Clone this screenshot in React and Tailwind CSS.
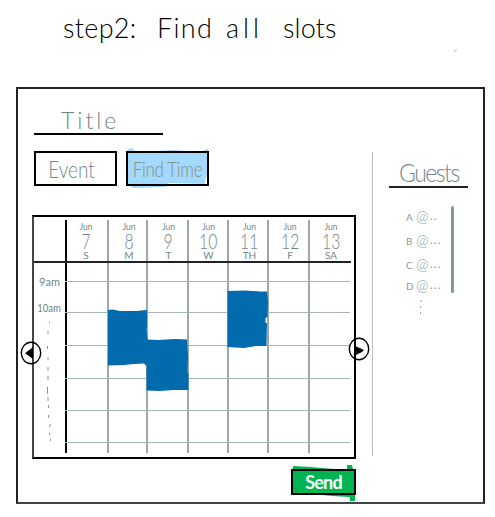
import React from "react";

const days = [
  { n: "7", d: "S", w: "w-[42px]", x: "pr-[2px]" },
  { n: "8", d: "M", w: "w-[39px]", x: "pl-[3px]" },
  { n: "9", d: "T", w: "w-[41px]", x: "pl-[2px]" },
  { n: "10", d: "W", w: "w-[40px]", x: "pl-[1px]" },
  { n: "11", d: "TH", w: "w-[40px]", x: "pl-[3px]" },
  { n: "12", d: "F", w: "w-[41px]", x: "pl-[3px]" },
  { n: "13", d: "SA", w: "w-[42px]", x: "pl-[2px]" },
];

const rows = [
  "h-[19px] border-b",
  "h-[31px] border-b",
  "h-[33px] border-b",
  "h-[33px] border-b",
  "h-[32px] border-b",
  "h-[32px] border-b",
  "h-[10px]",
];

const guests = [
  { n: "A", dots: "..", m: "h-[24px]" },
  { n: "B", dots: "...", m: "h-[24px]" },
  { n: "C", dots: "...", m: "h-[21px]" },
  { n: "D", dots: "...", m: "h-[20px]" },
];

function Heading() {
  return (
    <h1 className="flex h-[87px] pl-[63px] pt-[10px] text-[27px] leading-[36px] font-light text-black">
      <span className="w-[94px] tracking-[0.3px]">step2:</span>
      <span className="w-[69px] tracking-[1.3px]">Find</span>
      <span className="w-[57px] tracking-[4px]">all</span>
      <span className="tracking-[0.1px]">slots</span>
      <svg className="ml-[116px] mt-[38px] h-[6px] w-[6px]" viewBox="0 0 6 6" fill="none" stroke="#bbb">
        <path d="M1 4 Q1 2 4 2" />
      </svg>
    </h1>
  );
}

function Events() {
  return (
    <svg className="absolute left-0 top-0 h-[190px] w-[285px]" viewBox="65 263 285 190" fill="#026bae">
      <path d="M108 310 L113 309.5 L120 311 L136 311 L147 310 L147 327 L146.5 328 L147.5 339.5 L158 340 L175 339 L187 339.5 L188 357 L187.5 373 L188.5 373 L188.5 390 L174 390 L160 391 L146.5 390.5 L146.5 366 L144 363.5 L134 364 L124 365 L108 365.5Z" />
      <path d="M227.5 291 L245 290.5 L260 291.5 L267 291.5 L268 301 L267.5 317 L265.5 318 L265.5 323 L267 323 L266.5 346 L256 346 L244 348 L227.5 347Z" />
    </svg>
  );
}

function Arrow({ left }) {
  return (
    <svg className="h-[24px] w-[22px]" viewBox="0 0 22 24">
      <ellipse cx="11" cy="12" rx="9.7" ry="10.8" fill="none" stroke="#000" strokeWidth="1.4" />
      {left ? (
        <path d="M5 12.2 L13 6 V18Z" />
      ) : (
        <path d="M6 8.5 L16 13 L14 15 L7 18.5Z" />
      )}
    </svg>
  );
}

function Calendar() {
  return (
    <div className="relative ml-[14px] mt-[29px] h-[244px] w-[324px] border-2 border-black border-l-[#444] pt-[3px]">
      <div className="mr-[3px] flex h-[43px] border-b-2 border-[#222]">
        <div className="w-[31px]" />
        {days.map((c, i) => (
          <div
            key={c.n}
            className={`flex flex-col items-center ${c.w} ${c.x} ${i ? "border-l-2 border-[#9aa8aa]" : "border-l-2 border-black"} text-[#71868b]`}
          >
            <span className="mt-[2px] h-[10px] text-[8.5px] leading-[10px]">Jun</span>
            <span className="h-[18px] scale-x-75 text-[21px] font-light leading-[18px]">{c.n}</span>
            <span className="h-[10px] text-[10px] leading-[10px]">{c.d}</span>
          </div>
        ))}
      </div>
      <div className="flex">
        <div className="flex h-[190px] w-[31px] flex-col items-center text-[11px] leading-[14px] text-[#71868b]">
          <span className="mt-[12px] scale-y-110">9am</span>
          <span className="mt-[12px] scale-x-90 scale-y-110 text-[10.5px]">10am</span>
          <svg className="mt-[3px] h-[130px] w-[10px]" viewBox="0 0 10 130" fill="none" stroke="#8a979b" strokeWidth="1">
            <path d="M4.5 4v1 M3 13v3 M2.5 28v3 M3 39v3 M3 49v4 M3 58v4 M2.5 69v7 M3 79v4 M3.5 87v3 M3.5 97v3 M5.5 106l-1 3 M4.5 115v2 M5.5 121v2" />
          </svg>
        </div>
        <div className="relative mr-[3px]">
          {rows.map((r, i) => (
            <div key={i} className={`flex border-[#a5b4b6] ${r}`}>
              {days.map((c, j) => (
                <div key={c.n} className={`${c.w} ${j ? "border-l-2 border-[#9aa8aa]" : "border-l-2 border-black"}`} />
              ))}
            </div>
          ))}
          <Events />
        </div>
      </div>
      <div className="absolute -left-[14px] top-[124px]"><Arrow left /></div>
      <div className="absolute left-[314px] top-[120px]"><Arrow /></div>
    </div>
  );
}

function SendButton() {
  return (
    <button className="relative ml-[273px] mt-[10px] block h-[26px] w-[65px]">
      <svg className="absolute -left-px -top-[5px] h-[38px] w-[68px]" viewBox="290 464 68 38">
        <path d="M293 466 L311 467 L334 469 L347 469 L347 465 L352 465 L353 469 L355 470 L355 501 L350 501 L350 497 L332 496 L312 494 L292 494Z" fill="#00b551" />
      </svg>
      <span className="relative flex h-full items-center justify-center border-2 border-black pb-[1px] text-[18px] font-bold leading-[20px] tracking-[-0.8px] text-white">
        Send
      </span>
    </button>
  );
}

function Guests() {
  return (
    <aside className="ml-[16px] mt-[70px] w-[79px] text-[#8a9a9d]">
      <h2 className="h-[29px] border-b-2 border-[#222] pl-[10px] text-[23px] font-light leading-[26px] tracking-[-1.5px] text-[#71868b]">
        <span className="inline-block scale-y-110">Guests</span>
      </h2>
      <div className="mt-[18px] flex">
        <ul className="w-[62px] pl-[17px]">
          {guests.map((g) => (
            <li key={g.n} className={`flex items-start ${g.m}`}>
              <span className="w-[10px] text-[10px] leading-[22px]">{g.n}</span>
              <span className="w-[14px] text-[15px] font-light leading-[20px]">@</span>
              <span className="text-[12px] leading-[19px] tracking-[1px]">{g.dots}</span>
            </li>
          ))}
          <li>
            <svg className="ml-[13px] mt-[4px] h-[17px] w-[4px]" viewBox="0 0 4 17" stroke="#9aa7aa">
              <path d="M2 1v2 M1.5 7v2 M1.5 13v2" />
            </svg>
          </li>
        </ul>
        <div className="h-[87px] w-[3px] rounded-full bg-[#84979a]" />
      </div>
    </aside>
  );
}

export default function App() {
  return (
    <div className="h-[517px] w-[495px] overflow-hidden bg-white font-['Lato','Open_Sans',sans-serif]">
      <Heading />
      <main className="ml-[16px] flex h-[417px] w-[469px] border-2 border-[#222] border-b-[#444]">
        <section className="w-[354px]">
          <div className="ml-[16px] mt-[18px] h-[28px] w-[129px] border-b-2 border-black pl-[27px] text-[23px] font-light leading-[27px] tracking-[3px] text-[#71868b]">
            Title
          </div>
          <nav className="ml-[16px] mt-[16px] flex gap-[9px] leading-[32px] text-[#71868b]">
            <button className="h-[35px] w-[83px] border-2 border-black pr-[8px] text-[19px] font-light">
              <span className="inline-block scale-y-125">Event</span>
            </button>
            <button className="relative h-[35px] w-[83px]">
              <svg className="absolute -left-px -top-[3px] h-[41px] w-[85px]" viewBox="125 148 85 41" fill="#a3d9fd">
                <path d="M127 150 Q130 147 134 149 V151 H158 Q172 149 186 151 H203 L205 149 L206 150 L208 148 V175 L206 177 L205 184 L169 183 L166 187 L133 188 L130 185 L127 184Z" />
              </svg>
              <span className="relative block h-full border-2 border-black text-[17px] font-light tracking-[-0.3px] text-[#858f83]">
                <span className="inline-block scale-y-125">Find Time</span>
              </span>
            </button>
          </nav>
          <Calendar />
          <SendButton />
        </section>
        <div className="mt-[63px] h-[304px] w-px bg-[#b6c2c4]" />
        <Guests />
      </main>
    </div>
  );
}
